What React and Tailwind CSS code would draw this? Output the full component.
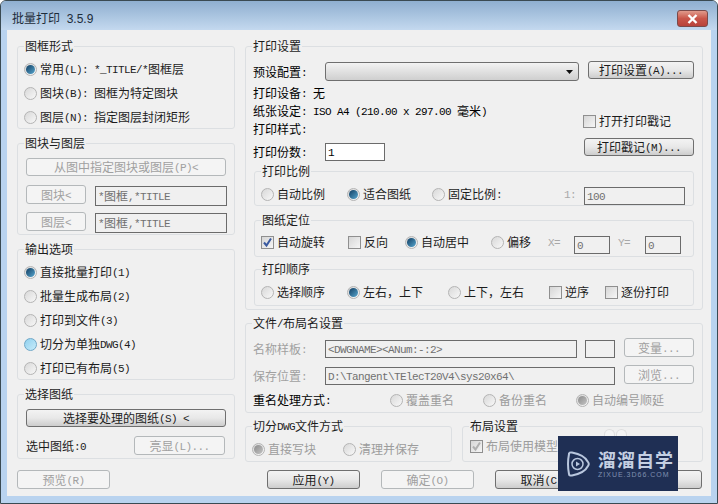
// mixed text: ascii runs get the narrow half-width look, cjk stays 12px
function mix(str) {
  return str.split(/([\x00-\x7f]+)/).filter(Boolean).map((part, i) =>
    /^[\x00-\x7f]+$/.test(part) ? (
      <span key={i} className="font-['Liberation_Mono',monospace] text-[11px] leading-none tracking-[-0.6px] whitespace-pre align-[1px]">
        {part}
      </span>
    ) : (
      <span key={i}>{part}</span>
    )
  );
}

function Group({ title, className = "", children }) {
  return (
    <fieldset className={`border border-[#dcdfe2] rounded-[3px] ${className}`}>
      <legend className="ml-[6px] px-[1px] text-[#1c1c1c] leading-4 h-4">{mix(title)}</legend>
      {children}
    </fieldset>
  );
}

function Radio({ label, checked, hot, disabled, className = "" }) {
  let circle = "bg-gradient-to-br from-[#d8d8d8] to-[#f8f8f8] border-[#b4b4b4]";
  if (hot) circle = "bg-gradient-to-br from-[#8fd0ee] to-[#c8ecfa] border-[#6fa8c8]";
  return (
    <div className={`flex items-center gap-[3px] h-4 shrink-0 whitespace-nowrap ${className}`}>
      <span className={`w-[13px] h-[13px] rounded-full border flex items-center justify-center shrink-0 ${circle}`}>
        {checked && (
          <span
            className={`w-[9px] h-[9px] rounded-full ${
              disabled
                ? "bg-gradient-to-br from-[#8c8c8c] to-[#c4c4c4]"
                : "bg-gradient-to-br from-[#123f63] to-[#58a8d0]"
            }`}
          />
        )}
      </span>
      <span className={disabled ? "text-[#9c9c9c]" : "text-[#1c1c1c]"}>{mix(label)}</span>
    </div>
  );
}

function Check({ label, checked, disabled, className = "" }) {
  return (
    <div className={`flex items-center gap-[3px] h-4 shrink-0 whitespace-nowrap ${className}`}>
      <span className="w-[13px] h-[13px] border border-[#8f8f8f] bg-gradient-to-br from-[#d6d6d6] to-[#f6f6f6] flex items-center justify-center shrink-0">
        {checked && (
          <svg width="11" height="11" viewBox="0 0 11 11">
            <path
              d="M2 5.5 L4.5 8.5 L9 1.5"
              fill="none"
              stroke={disabled ? "#b0b0b0" : "#3a5aa0"}
              strokeWidth="2"
            />
          </svg>
        )}
      </span>
      <span className={disabled ? "text-[#9c9c9c]" : "text-[#1c1c1c]"}>{mix(label)}</span>
    </div>
  );
}

function Btn({ children, disabled, className = "" }) {
  return (
    <div
      className={`flex items-center justify-center rounded-[3px] border shrink-0 whitespace-nowrap ${
        disabled
          ? "border-[#b4b8ba] bg-[#f4f4f4] text-[#a0a0a0]"
          : "border-[#6f6f6f] bg-gradient-to-b from-[#f3f3f3] via-[#e8e8e8] to-[#cdcdcd] text-[#1c1c1c]"
      } ${className}`}
    >
      {children ? <span>{mix(children)}</span> : null}
    </div>
  );
}

function Box({ children, white, className = "" }) {
  return (
    <div
      className={`flex items-center border border-[#6b6b6b] pl-[2px] shrink-0 overflow-hidden whitespace-nowrap ${
        white ? "bg-white text-black" : "bg-[#f0f0f0] text-[#707070]"
      } ${className}`}
    >
      {children ? <span>{mix(children)}</span> : null}
    </div>
  );
}

function Watermark() {
  return (
    <div className="absolute left-[557px] top-[435px] w-[120px] h-[55px] bg-[#1f2f54] flex items-center pl-[8px] gap-[8px]">
      {/* 水印上方的两个淡圆 */}
      <div className="absolute left-[46px] -top-[7px] flex gap-px">
        <span className="w-[11px] h-[7px] rounded-t-full border border-b-0 border-[#dedede] bg-[#f4f4f4]" />
        <span className="w-[11px] h-[7px] rounded-t-full border border-b-0 border-[#dedede] bg-[#f4f4f4]" />
      </div>
      <svg width="24" height="28" viewBox="0 0 24 28" fill="none">
        <path
          d="M3 4 Q3 2 6 2.5 C14 4 20 8 22 12 Q23.5 14 22 16 C20 20 14 24 6 25.5 Q3 26 3 24 Q1 14 3 4 Z"
          stroke="#b9c7de"
          strokeWidth="2"
        />
        <circle cx="11.5" cy="14" r="5.5" stroke="#b9c7de" strokeWidth="1.5" />
        <path d="M10 11.5 L14 14 L10 16.5 Z" fill="#b9c7de" />
      </svg>
      <div className="flex flex-col items-start">
        <span className="text-[18px] leading-[22px] font-bold tracking-[1px] text-[#c4cfe2] whitespace-nowrap">
          溜溜自学
        </span>
        <span className="font-['Liberation_Sans',sans-serif] text-[7px] leading-[10px] tracking-[1px] text-[#7f8fb0] whitespace-nowrap">
          ZIXUE.3D66.COM
        </span>
      </div>
    </div>
  );
}

export default function App() {
  return (
    <div className="relative w-[718px] h-[504px] overflow-hidden rounded-t-[6px] border border-[#3a4a52] bg-[#b9d3ef] font-['Noto_Sans_CJK_SC',sans-serif] text-xs leading-4">
      {/* 标题栏 */}
      <div className="h-[29px] bg-gradient-to-b from-[#8fafd0] to-[#c4d9ef] flex items-start justify-between pl-[11px] pr-[9px]">
        <div className="mt-[10px] text-[#1d2c3a] font-['Liberation_Sans','Noto_Sans_CJK_SC',sans-serif] whitespace-pre">批量打印  3.5.9</div>
        <div className="mt-[9px] w-[31px] h-[17px] rounded-[3px] border border-[#7a4a4a] bg-gradient-to-b from-[#e09a8c] via-[#c9564a] to-[#b8423a] flex items-center justify-center">
          <svg width="11" height="10" viewBox="0 0 11 10">
            <path d="M1.5 1 L9.5 9 M9.5 1 L1.5 9" stroke="#fff" strokeWidth="2.4" />
          </svg>
        </div>
      </div>

      {/* 主体 */}
      <div className="ml-[6px] w-[704px] h-[466px] bg-[#f0f0f0] pl-[10px] pt-[8px] flex gap-[10px]">
        {/* 左列 */}
        <div className="w-[218px] shrink-0 flex flex-col">
          <Group title="图框形式" className="h-[91px]">
            <div className="pl-[6px] pt-[7px] flex flex-col gap-[8px]">
              <Radio checked label="常用(L): *_TITLE/*图框层" />
              <Radio label="图块(B): 图框为特定图块" />
              <Radio label="图层(N): 指定图层封闭矩形" />
            </div>
          </Group>

          <Group title="图块与图层" className="h-[100px] mt-[6px]">
            <div className="pl-[8px] pt-[7px] flex flex-col">
              <Btn disabled className="w-[200px] h-[18px]">从图中指定图块或图层(P)&lt;</Btn>
              <div className="flex mt-[9px] gap-[9px]">
                <Btn disabled className="w-[60px] h-[19px]">图块&lt;</Btn>
                <Box className="w-[132px] h-[20px] mt-[1px]">*图框,*TITLE</Box>
              </div>
              <div className="flex mt-[6px] gap-[9px]">
                <Btn disabled className="w-[60px] h-[19px]">图层&lt;</Btn>
                <Box className="w-[132px] h-[20px] mt-[1px]">*图框,*TITLE</Box>
              </div>
            </div>
          </Group>

          <Group title="输出选项" className="h-[139px] mt-[6px]">
            <div className="pl-[6px] pt-[7px] flex flex-col gap-[8px]">
              <Radio checked label="直接批量打印(1)" />
              <Radio label="批量生成布局(2)" />
              <Radio label="打印到文件(3)" />
              <Radio hot label="切分为单独DWG(4)" />
              <Radio label="打印已有布局(5)" />
            </div>
          </Group>

          <Group title="选择图纸" className="h-[73px] mt-[6px]">
            <div className="pl-[8px] pt-[7px] flex flex-col">
              <Btn className="w-[200px] h-[18px]">选择要处理的图纸(S) &lt;</Btn>
              <div className="flex items-center justify-between w-[200px] mt-[9px]">
                <span className="text-[#1c1c1c]">{mix("选中图纸:0")}</span>
                <Btn disabled className="w-[91px] h-[19px] mr-[1px]">亮显(L)...</Btn>
              </div>
            </div>
          </Group>

          <Btn disabled className="w-[93px] h-[19px] mt-[11px]">预览(R)</Btn>
        </div>

        {/* 右列 */}
        <div className="w-[458px] shrink-0 flex flex-col">
          <Group title="打印设置" className="h-[272px]">
            <div className="pl-[7px] pr-[8px] flex flex-col">
              <div className="flex h-[109px]">
                <div className="w-[331px] shrink-0 flex flex-col pt-[8px]">
                  <div className="flex items-center">
                    <span className="w-[72px] shrink-0">{mix("预设配置:")}</span>
                    <div className="w-[254px] h-[19px] rounded-[3px] border border-[#6f6f6f] bg-gradient-to-b from-[#f3f3f3] to-[#cfcfcf] flex items-center justify-end pr-[5px]">
                      <svg width="7" height="4" viewBox="0 0 7 4">
                        <path d="M0 0 H7 L3.5 4 Z" fill="#111" />
                      </svg>
                    </div>
                  </div>
                  <div className="mt-[4px] h-4">{mix("打印设备: 无")}</div>
                  <div className="mt-[2px] h-4 whitespace-nowrap">{mix("纸张设定: ISO A4 (210.00 x 297.00 毫米)")}</div>
                  <div className="mt-[2px] h-4">{mix("打印样式:")}</div>
                  <div className="flex items-center mt-[6px]">
                    <span className="w-[72px] shrink-0">{mix("打印份数:")}</span>
                    <Box white className="w-[60px] h-[18px]">1</Box>
                  </div>
                </div>
                <div className="w-[110px] shrink-0 flex flex-col pt-[7px]">
                  <Btn className="w-[106px] h-[18px] ml-[4px]">打印设置(A)...</Btn>
                  <Check label="打开打印戳记" className="mt-[34px] -ml-px" />
                  <Btn className="w-[110px] h-[18px] mt-[9px]">打印戳记(M)...</Btn>
                </div>
              </div>

              <Group title="打印比例" className="ml-px w-[440px] h-[43px]">
                <div className="flex items-start pl-[6px] pt-[7px]">
                  <Radio label="自动比例" className="w-[86px]" />
                  <Radio checked label="适合图纸" className="w-[85px]" />
                  <Radio label="固定比例:" className="w-[132px]" />
                  <span className="w-[20px] text-[#a8a8a8]">{mix("1:")}</span>
                  <Box className="w-[101px] h-[18px] mt-px">100</Box>
                </div>
              </Group>

              <Group title="图纸定位" className="ml-px w-[440px] h-[45px] mt-[6px]">
                <div className="flex items-start pl-[6px] pt-[6px]">
                  <Check checked label="自动旋转" className="w-[87px]" />
                  <Check label="反向" className="w-[57px]" />
                  <Radio checked label="自动居中" className="w-[86px]" />
                  <Radio label="偏移" className="w-[57px]" />
                  <span className="w-[26px] text-[#a8a8a8]">{mix("X=")}</span>
                  <Box className="w-[36px] h-[18px] mt-[2px]">0</Box>
                  <span className="w-[27px] ml-[8px] text-[#a8a8a8]">{mix("Y=")}</span>
                  <Box className="w-[36px] h-[18px] mt-[2px]">0</Box>
                </div>
              </Group>

              <Group title="打印顺序" className="ml-px w-[440px] h-[45px] mt-[4px]">
                <div className="flex items-start pl-[6px] pt-[7px]">
                  <Radio label="选择顺序" className="w-[86px]" />
                  <Radio checked label="左右，上下" className="w-[101px]" />
                  <Radio label="上下，左右" className="w-[101px]" />
                  <Check label="逆序" className="w-[56px]" />
                  <Check label="逐份打印" />
                </div>
              </Group>
            </div>
          </Group>

          <Group title="文件/布局名设置" className="h-[98px] mt-[5px]">
            <div className="pl-[7px] pt-[9px] flex flex-col">
              <div className="flex items-start h-[18px]">
                <span className="w-[72px] leading-[18px] text-[#a0a0a0]">{mix("名称样板:")}</span>
                <Box className="w-[252px] h-[18px]">&lt;DWGNAME&gt;&lt;ANum:-:2&gt;</Box>
                <Box className="w-[30px] h-[18px] ml-[8px]" />
                <Btn disabled className="w-[70px] h-[19px] ml-[9px] -mt-[2px]">变量...</Btn>
              </div>
              <div className="flex items-start h-[18px] mt-[9px]">
                <span className="w-[72px] leading-[18px] text-[#a0a0a0]">{mix("保存位置:")}</span>
                <Box className="w-[290px] h-[18px]">{"D:\\Tangent\\TElecT20V4\\sys20x64\\"}</Box>
                <Btn disabled className="w-[70px] h-[19px] ml-[9px] -mt-[2px]">浏览...</Btn>
              </div>
              <div className="flex items-center h-4 mt-[7px]">
                <span className="w-[137px] text-black">{mix("重名处理方式:")}</span>
                <Radio disabled label="覆盖重名" className="w-[93px]" />
                <Radio disabled label="备份重名" className="w-[93px]" />
                <Radio disabled checked label="自动编号顺延" />
              </div>
            </div>
          </Group>

          <div className="flex gap-[10px] mt-[5px]">
            <Group title="切分DWG文件方式" className="w-[207px] h-[44px]">
              <div className="flex pl-[6px] pt-[7px]">
                <Radio disabled checked label="直接写块" className="w-[91px]" />
                <Radio disabled label="清理并保存" />
              </div>
            </Group>
            <Group title="布局设置" className="w-[241px] h-[44px]">
              <div className="pl-[7px] pt-[4px]">
                <Check disabled checked label="布局使用模型" />
              </div>
            </Group>
          </div>

          <div className="flex gap-[21px] ml-[22px] mt-[8px]">
            <Btn className="w-[93px] h-[19px]">应用(Y)</Btn>
            <Btn disabled className="w-[93px] h-[19px]">确定(O)</Btn>
            <Btn className="w-[93px] h-[19px]">取消(C)</Btn>
            <Btn className="w-[93px] h-[19px]" />
          </div>
        </div>
      </div>

      <Watermark />
    </div>
  );
}
